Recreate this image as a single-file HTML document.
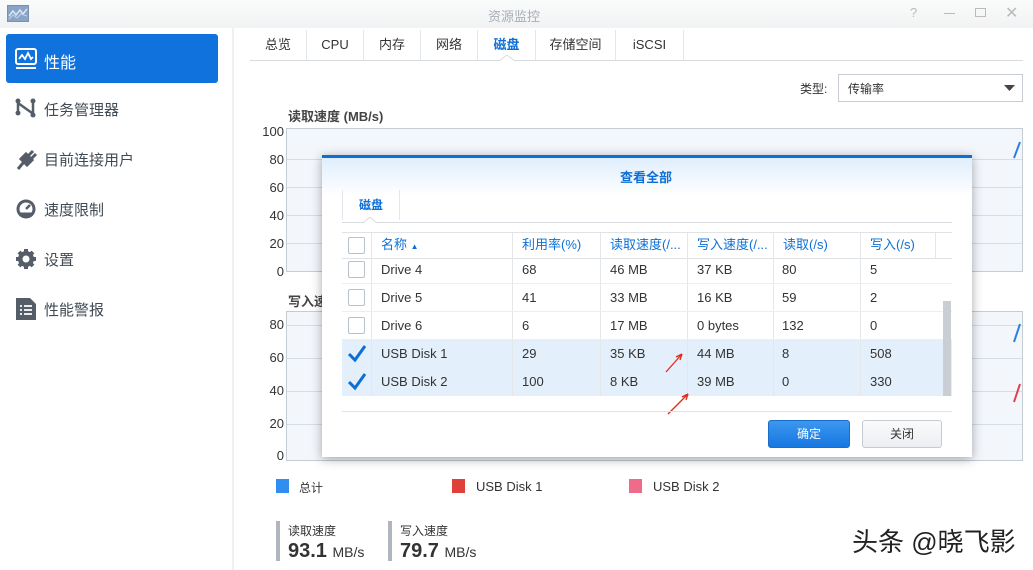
<!DOCTYPE html>
<html><head><meta charset="utf-8"><style>
*{margin:0;padding:0;box-sizing:border-box}
body{width:1033px;height:570px;overflow:hidden;background:#fff;font-family:"Liberation Sans","Noto Sans CJK SC",sans-serif;color:#333;position:relative;font-size:13px}
.a{position:absolute}
.t{position:absolute;white-space:nowrap}
.nav{font-size:15px;color:#414b55}
.gl{position:absolute;left:0;right:0;height:1px;background:#d6dde5}
.yl{position:absolute;width:30px;text-align:right;font-size:13px;color:#333}
.tab{position:absolute;top:30px;height:30px;line-height:26px;padding-top:0;font-size:13px;color:#333;text-align:center;border-right:1px solid #e3e6ea}
.tab b{font-weight:normal;position:relative;top:2px}
.row{position:absolute;left:342px;width:610px;height:28px;border-bottom:1px solid #eceff2;font-size:13px;color:#333}
.row span,.hd span{position:absolute;top:0;line-height:28px}
.cb{position:absolute;left:6px;top:5px;width:17px;height:17px;border:1px solid #b9c0c8;background:#fff;border-radius:2px}
.vl{position:absolute;top:0;bottom:0;width:1px;background:#e4e7ea}
</style></head><body>
<div class="a" style="left:0;top:0;width:1033px;height:28px;background:linear-gradient(#fafbfb,#f1f2f3)"></div>
<div class="a" style="left:7px;top:5px;width:22px;height:17px;background:#8aa4c8;border:1px solid #7a90b0"><svg width="20" height="15"><path d="M1 10 L5 5 L8 9 L12 4 L15 8 L19 3" stroke="#d9e6f7" stroke-width="1.5" fill="none"/><path d="M1 13 L5 9 L9 12 L13 8 L19 10" stroke="#c3d3ea" stroke-width="1" fill="none"/></svg></div>
<div class="t" style="left:488px;top:6px;font-size:13px;color:#a7aeb6">资源监控</div>
<div class="t" style="left:910px;top:5px;font-size:13px;color:#bbb">?</div>
<div class="a" style="left:944px;top:13px;width:11px;height:1px;background:#bbb"></div>
<div class="a" style="left:975px;top:8px;width:11px;height:9px;border:1px solid #bbb"></div>
<div class="t" style="left:1005px;top:3px;font-size:16px;color:#bbb">✕</div>
<div class="a" style="left:232px;top:28px;width:2px;height:542px;background:#eef0f2"></div>
<div class="a" style="left:6px;top:34px;width:212px;height:49px;background:#0f72dd;border-radius:3px"></div>
<svg class="a" style="left:15px;top:48px" width="22" height="22"><rect x="1" y="1" width="20" height="15" rx="2" fill="none" stroke="#fff" stroke-width="2"/><path d="M4 11 L7 7 L10 11 L13 5 L16 11 L18 9" stroke="#fff" stroke-width="1.8" fill="none"/><rect x="1" y="19" width="20" height="2" fill="#fff"/></svg>
<div class="t nav" style="left:44px;top:49px;color:#fff;font-size:16px">性能</div>
<svg class="a" style="left:15px;top:98px" width="22" height="20"><circle cx="3" cy="3" r="2.5" fill="#555e68"/><circle cx="3" cy="15" r="2.5" fill="#555e68"/><circle cx="18" cy="17" r="2.5" fill="#555e68"/><circle cx="18" cy="3" r="2.5" fill="#555e68"/><path d="M3 3 V15 M3 5 L17 15 M18 3 V17" stroke="#555e68" stroke-width="2.5"/></svg>
<div class="t nav" style="left:44px;top:99px">任务管理器</div>
<svg class="a" style="left:15px;top:147px" width="22" height="24"><path d="M3 22 L8 16 M6 12 L12 18 L17 13 L11 7 Z M12 10 L18 4 M15 13 L21 7" stroke="#555e68" stroke-width="3" fill="#555e68"/></svg>
<div class="t nav" style="left:44px;top:149px">目前连接用户</div>
<svg class="a" style="left:15px;top:198px" width="22" height="22"><circle cx="11" cy="11" r="9.5" fill="#555e68"/><circle cx="11" cy="11" r="6.5" fill="#fff"/><path d="M11 11 L15 7" stroke="#555e68" stroke-width="2.5"/><path d="M5 16 H17" stroke="#555e68" stroke-width="3"/></svg>
<div class="t nav" style="left:44px;top:199px">速度限制</div>
<svg class="a" style="left:15px;top:248px" width="22" height="22"><circle cx="11" cy="11" r="8" fill="#555e68"/><path d="M11 1 V21 M1 11 H21 M4 4 L18 18 M18 4 L4 18" stroke="#555e68" stroke-width="4"/><circle cx="11" cy="11" r="3.5" fill="#fff"/></svg>
<div class="t nav" style="left:44px;top:249px">设置</div>
<svg class="a" style="left:16px;top:298px" width="20" height="22"><path d="M0 0 H14 L20 6 V22 H0 Z" fill="#555e68"/><path d="M4 8 H6 M8 8 H16 M4 12 H6 M8 12 H16 M4 16 H6 M8 16 H16" stroke="#fff" stroke-width="1.8"/></svg>
<div class="t nav" style="left:44px;top:299px">性能警报</div>
<div class="a" style="left:250px;top:60px;width:773px;height:1px;background:#d8dce0"></div>
<div class="tab" style="left:250px;width:57px"><b>总览</b></div>
<div class="tab" style="left:307px;width:57px"><b>CPU</b></div>
<div class="tab" style="left:364px;width:57px"><b>内存</b></div>
<div class="tab" style="left:421px;width:57px"><b>网络</b></div>
<div class="tab" style="left:478px;width:58px;color:#0d6fd6"><b style="font-weight:bold">磁盘</b></div>
<div class="tab" style="left:536px;width:80px"><b>存储空间</b></div>
<div class="tab" style="left:616px;width:68px"><b>iSCSI</b></div>
<svg class="a" style="left:499px;top:55px" width="16" height="7"><path d="M0 6 L8 0 L16 6" fill="#fff" stroke="#d8dce0"/></svg>
<div class="t" style="left:800px;top:80px;font-size:12px">类型:</div>
<div class="a" style="left:838px;top:74px;width:185px;height:28px;border:1px solid #c8ced4;background:#fff"></div>
<div class="t" style="left:848px;top:80px;font-size:12px">传输率</div>
<svg class="a" style="left:1004px;top:85px" width="11" height="7"><path d="M0 0 H11 L5.5 6 Z" fill="#444"/></svg>
<div class="t" style="left:288px;top:106px;font-size:13px;font-weight:bold;color:#444">读取速度 (MB/s)</div>
<div class="a" style="left:286px;top:128px;width:737px;height:144px;background:#f3f7fc;border:1px solid #c5ccd4">
<div class="gl" style="top:30px"></div><div class="gl" style="top:58px"></div><div class="gl" style="top:86px"></div><div class="gl" style="top:114px"></div></div>
<div class="yl" style="left:254px;top:124px">100</div><div class="yl" style="left:254px;top:152px">80</div><div class="yl" style="left:254px;top:180px">60</div><div class="yl" style="left:254px;top:208px">40</div><div class="yl" style="left:254px;top:236px">20</div><div class="yl" style="left:254px;top:264px">0</div>
<svg class="a" style="left:1012px;top:140px" width="10" height="20"><path d="M2 18 L8 2" stroke="#2a7fe0" stroke-width="2"/></svg>
<div class="t" style="left:288px;top:291px;font-size:13px;font-weight:bold;color:#444">写入速</div>
<div class="a" style="left:286px;top:311px;width:737px;height:150px;background:#f3f7fc;border:1px solid #c5ccd4">
<div class="gl" style="top:13px"></div><div class="gl" style="top:46px"></div><div class="gl" style="top:79px"></div><div class="gl" style="top:112px"></div></div>
<div class="yl" style="left:254px;top:317px">80</div><div class="yl" style="left:254px;top:350px">60</div><div class="yl" style="left:254px;top:383px">40</div><div class="yl" style="left:254px;top:416px">20</div><div class="yl" style="left:254px;top:448px">0</div>
<svg class="a" style="left:1012px;top:322px" width="10" height="22"><path d="M2 20 L8 2" stroke="#2a7fe0" stroke-width="2"/></svg>
<svg class="a" style="left:1012px;top:382px" width="10" height="22"><path d="M2 20 L8 2" stroke="#e04050" stroke-width="2"/></svg>
<div class="a" style="left:276px;top:479px;width:13px;height:14px;background:#2f8ef0"></div><div class="t" style="left:299px;top:479px;font-size:12px">总计</div>
<div class="a" style="left:452px;top:479px;width:13px;height:14px;background:#e0403a"></div><div class="t" style="left:476px;top:479px;font-size:13px">USB Disk 1</div>
<div class="a" style="left:629px;top:479px;width:13px;height:14px;background:#f06a8a"></div><div class="t" style="left:653px;top:479px;font-size:13px">USB Disk 2</div>
<div class="a" style="left:276px;top:521px;width:4px;height:40px;background:#b0b6bd"></div>
<div class="t" style="left:288px;top:522px;font-size:12px">读取速度</div>
<div class="t" style="left:288px;top:540px;font-size:20px;font-weight:bold;color:#333">93.1 <span style="font-size:14px;font-weight:normal">MB/s</span></div>
<div class="a" style="left:388px;top:521px;width:4px;height:40px;background:#b0b6bd"></div>
<div class="t" style="left:400px;top:522px;font-size:12px">写入速度</div>
<div class="t" style="left:400px;top:540px;font-size:20px;font-weight:bold;color:#333">79.7 <span style="font-size:14px;font-weight:normal">MB/s</span></div>
<div class="t" style="left:852px;top:522px;font-size:26px;color:#222">头条 @晓飞影</div>
<div class="a" style="left:322px;top:155px;width:650px;height:302px;background:#fff;box-shadow:0 2px 10px rgba(0,0,0,.35);border-top:3px solid #0d6fd6"></div>
<div class="a" style="left:322px;top:158px;width:650px;height:38px;background:linear-gradient(#dfeefc,#fff)"></div>
<div class="t" style="left:620px;top:167px;font-size:13px;color:#0d6fd6;font-weight:bold">查看全部</div>
<div class="a" style="left:342px;top:190px;width:1px;height:30px;background:#e3e6ea"></div>
<div class="a" style="left:399px;top:190px;width:1px;height:30px;background:#e3e6ea"></div>
<div class="t" style="left:359px;top:196px;font-size:12px;color:#0d6fd6;font-weight:bold">磁盘</div>
<div class="a" style="left:342px;top:222px;width:610px;height:1px;background:#d8dce0"></div>
<svg class="a" style="left:363px;top:217px" width="14" height="6"><path d="M0 6 L7 0 L14 6" fill="#fff" stroke="#d8dce0"/></svg>
<div class="a" style="left:342px;top:232px;width:610px;height:1px;background:#dfe3e7"></div>
<div class="hd a" style="left:342px;top:233px;width:610px;height:26px;border-bottom:1px solid #dfe3e7;font-size:13px;color:#0d6fd6">
<div class="cb" style="top:4px"></div>
<span style="left:39px;line-height:24px">名称 <small style="font-size:8px">▲</small></span><span style="left:180px;line-height:24px">利用率(%)</span><span style="left:268px;line-height:24px">读取速度(/...</span><span style="left:355px;line-height:24px">写入速度(/...</span><span style="left:441px;line-height:24px">读取(/s)</span><span style="left:528px;line-height:24px">写入(/s)</span>
<div class="vl" style="left:29px"></div><div class="vl" style="left:170px"></div><div class="vl" style="left:258px"></div><div class="vl" style="left:345px"></div><div class="vl" style="left:431px"></div><div class="vl" style="left:518px"></div><div class="vl" style="left:593px"></div></div>
<div class="row" style="top:256px"><div class="cb"></div><span style="left:39px">Drive 4</span><span style="left:180px">68</span><span style="left:268px">46 MB</span><span style="left:355px">37 KB</span><span style="left:440px">80</span><span style="left:528px">5</span><div class="vl" style="left:29px"></div><div class="vl" style="left:170px"></div><div class="vl" style="left:258px"></div><div class="vl" style="left:345px"></div><div class="vl" style="left:431px"></div><div class="vl" style="left:518px"></div></div>
<div class="row" style="top:284px"><div class="cb"></div><span style="left:39px">Drive 5</span><span style="left:180px">41</span><span style="left:268px">33 MB</span><span style="left:355px">16 KB</span><span style="left:440px">59</span><span style="left:528px">2</span><div class="vl" style="left:29px"></div><div class="vl" style="left:170px"></div><div class="vl" style="left:258px"></div><div class="vl" style="left:345px"></div><div class="vl" style="left:431px"></div><div class="vl" style="left:518px"></div></div>
<div class="row" style="top:312px"><div class="cb"></div><span style="left:39px">Drive 6</span><span style="left:180px">6</span><span style="left:268px">17 MB</span><span style="left:355px">0 bytes</span><span style="left:440px">132</span><span style="left:528px">0</span><div class="vl" style="left:29px"></div><div class="vl" style="left:170px"></div><div class="vl" style="left:258px"></div><div class="vl" style="left:345px"></div><div class="vl" style="left:431px"></div><div class="vl" style="left:518px"></div></div>
<div class="row" style="top:340px;background:#e3effb;border-bottom:none"><svg class="a" style="left:5px;top:4px" width="20" height="20"><path d="M2 10 L8 16 L18 2" stroke="#0d6fd6" stroke-width="3" fill="none"/></svg><span style="left:39px">USB Disk 1</span><span style="left:180px">29</span><span style="left:268px">35 KB</span><span style="left:355px">44 MB</span><span style="left:440px">8</span><span style="left:528px">508</span><div class="vl" style="left:29px"></div><div class="vl" style="left:170px"></div><div class="vl" style="left:258px"></div><div class="vl" style="left:345px"></div><div class="vl" style="left:431px"></div><div class="vl" style="left:518px"></div></div>
<div class="row" style="top:368px;background:#e3effb;border-bottom:none"><svg class="a" style="left:5px;top:4px" width="20" height="20"><path d="M2 10 L8 16 L18 2" stroke="#0d6fd6" stroke-width="3" fill="none"/></svg><span style="left:39px">USB Disk 2</span><span style="left:180px">100</span><span style="left:268px">8 KB</span><span style="left:355px">39 MB</span><span style="left:440px">0</span><span style="left:528px">330</span><div class="vl" style="left:29px"></div><div class="vl" style="left:170px"></div><div class="vl" style="left:258px"></div><div class="vl" style="left:345px"></div><div class="vl" style="left:431px"></div><div class="vl" style="left:518px"></div></div>
<div class="a" style="left:943px;top:301px;width:8px;height:95px;background:#c9ced4"></div>
<svg class="a" style="left:664px;top:352px" width="30" height="66"><path d="M2 20 L18 2" stroke="#e02a1a" stroke-width="1.3"/><path d="M18 2 L12 5 M18 2 L16 8" stroke="#e02a1a" stroke-width="1.3"/><path d="M4 62 L24 42" stroke="#e02a1a" stroke-width="1.3"/><path d="M24 42 L18 45 M24 42 L22 48" stroke="#e02a1a" stroke-width="1.3"/></svg>
<div class="a" style="left:342px;top:411px;width:610px;height:1px;background:#dfe3e7"></div>
<div class="a" style="left:768px;top:420px;width:82px;height:28px;background:linear-gradient(#3c97f0,#1677e0);border:1px solid #1a6dc8;border-radius:3px;color:#fff;text-align:center;line-height:26px;font-size:12px">确定</div>
<div class="a" style="left:862px;top:420px;width:80px;height:28px;background:linear-gradient(#fafbfc,#eceef1);border:1px solid #c5cbd1;border-radius:3px;color:#333;text-align:center;line-height:26px;font-size:12px">关闭</div>
</body></html>
